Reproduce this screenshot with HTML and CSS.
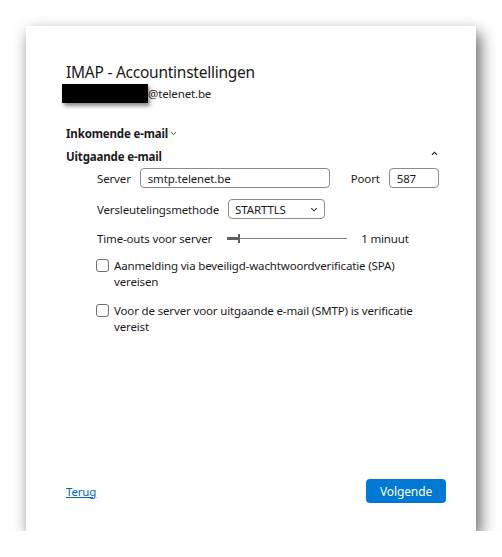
FILE: index.html
```html
<!DOCTYPE html>
<html>
<head>
<meta charset="utf-8">
<link rel="stylesheet" href="styles.css">
</head>
<body>
<div class="dialog">
  <div class="content">
    <h1 class="title">IMAP - Accountinstellingen</h1>
    <div class="account"><span class="redact"></span><span>@telenet.be</span></div>

    <div class="section-head first"><span>Inkomende e-mail</span><svg class="chev-down" width="7" height="5" viewBox="0 0 7 5"><path d="M1 1.2 L3.5 3.6 L6 1.2" fill="none" stroke="#444" stroke-width="1"/></svg></div>
    <div class="section-head second"><span>Uitgaande e-mail</span><svg class="chev-up" width="7" height="5" viewBox="0 0 7 5"><path d="M1 3.8 L3.5 1.4 L6 3.8" fill="none" stroke="#333" stroke-width="1.2"/></svg></div>

    <div class="form">
      <div class="row row-server">
        <span class="label">Server</span>
        <div class="field server-field">smtp.telenet.be</div>
        <span class="label port-label">Poort</span>
        <div class="field port-field">587</div>
      </div>
      <div class="row row-enc">
        <span class="label">Versleutelingsmethode</span>
        <div class="field select"><span>STARTTLS</span><svg width="8" height="5" viewBox="0 0 8 5"><path d="M1.2 1.2 L4 3.8 L6.8 1.2" fill="none" stroke="#333" stroke-width="1.1"/></svg></div>
      </div>
      <div class="row row-time">
        <span class="label">Time-outs voor server</span>
        <div class="slider"><span class="fill"></span><span class="thumb"></span><span class="track"></span></div>
        <span class="label slider-val">1 minuut</span>
      </div>
      <div class="check check-1">
        <span class="box"></span>
        <span class="check-text">Aanmelding via beveiligd-wachtwoordverificatie (SPA) vereisen</span>
      </div>
      <div class="check check-2">
        <span class="box"></span>
        <span class="check-text">Voor de server voor uitgaande e-mail (SMTP) is verificatie vereist</span>
      </div>
    </div>
  </div>
  <div class="footer">
    <a class="back" href="#">Terug</a>
    <button class="next">Volgende</button>
  </div>
</div>
</body>
</html>
```

FILE: styles.css
```css
html, body {
  margin: 0;
  padding: 0;
  background: #ffffff;
}
body {
  font-family: "Noto Sans", "Open Sans", "Liberation Sans", sans-serif;
  font-size: 11.5px;
  letter-spacing: -0.15px;
  color: #1b1b1b;
}
.dialog {
  margin: 26px 0 0 26px;
  width: 450px;
  height: 505px;
  background: #ffffff;
  box-shadow: 4px 7px 15px rgba(0, 0, 0, 0.62);
  display: flex;
  flex-direction: column;
  box-sizing: border-box;
  padding: 34px 30px 28px 40px;
}
.content {
  flex: 1;
}
.title {
  margin: 0;
  font-size: 15.5px;
  letter-spacing: -0.25px;
  font-weight: 400;
  line-height: 24px;
  color: #1a1a1a;
}
.account {
  display: flex;
  align-items: center;
  height: 19px;
  margin-left: -4px;
}
.redact {
  display: block;
  width: 86px;
  height: 19px;
  background: #000;
  box-shadow: 2px 3px 4px rgba(0, 0, 0, 0.45);
}
.section-head {
  display: flex;
  align-items: center;
  font-weight: 700;
  height: 20px;
  color: #1a1a1a;
}
.section-head.first {
  margin-top: 20px;
}
.section-head.second {
  margin-top: 3px;
  justify-content: space-between;
  padding-right: 8px;
}
.chev-down {
  margin-left: 2px;
  margin-top: 1px;
}
.chev-up {
  margin-top: -6px;
}
.form {
  padding-left: 31px;
  width: 349px;
}
.row {
  display: flex;
  align-items: center;
  height: 20px;
}
.row-server {
  margin-top: 2px;
}
.row-enc {
  margin-top: 11px;
}
.row-time {
  margin-top: 9px;
}
.label {
  white-space: nowrap;
}
.field {
  box-sizing: border-box;
  height: 20px;
  border: 1px solid #8c8c8c;
  border-radius: 4px;
  padding: 0 7px;
  display: flex;
  align-items: center;
}
.server-field {
  margin-left: 9px;
  width: 190px;
}
.port-label {
  margin-left: 21px;
}
.port-field {
  margin-left: 9px;
  width: 50px;
}
.select {
  margin-left: 9px;
  width: 97px;
  justify-content: space-between;
  padding: 0 6px 0 6px;
}
.slider {
  margin-left: 15px;
  width: 120px;
  height: 10px;
  display: flex;
  align-items: center;
}
.slider .fill {
  display: block;
  width: 11px;
  height: 3px;
  background: #5f5f5f;
}
.slider .thumb {
  display: block;
  width: 2px;
  height: 9px;
  background: #5f5f5f;
}
.slider .track {
  display: block;
  flex: 1;
  height: 1px;
  background: #7a7a7a;
}
.slider-val {
  margin-left: 14px;
}
.check {
  display: flex;
  align-items: flex-start;
  line-height: 16px;
}
.check-1 {
  margin-top: 10px;
}
.check-2 {
  margin-top: 13px;
}
.box {
  flex: none;
  box-sizing: border-box;
  width: 13px;
  height: 13px;
  border: 1px solid #6e6e6e;
  border-radius: 3px;
  margin: 1px 5px 0 -1px;
}
.check-text {
  width: 310px;
}
.footer {
  display: flex;
  align-items: center;
  justify-content: space-between;
}
.back {
  color: #0067c0;
  text-decoration: underline;
}
.next {
  width: 80px;
  height: 24px;
  border: none;
  border-radius: 4px;
  background: #0078d4;
  color: #ffffff;
  font-family: "Noto Sans", "Open Sans", "Liberation Sans", sans-serif;
  font-size: 12px;
  letter-spacing: -0.1px;
  padding: 0;
}
```
